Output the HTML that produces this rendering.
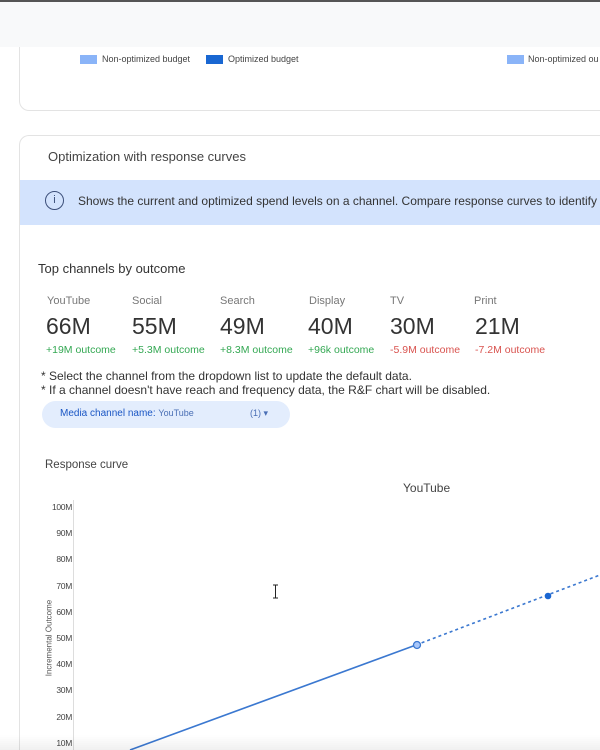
<!DOCTYPE html>
<html><head><meta charset="utf-8"><style>
*{margin:0;padding:0;box-sizing:border-box}
html,body{width:600px;height:750px;overflow:hidden}
body{background:#fff;font-family:"Liberation Sans",Arial,sans-serif;color:#3c4043}
#w{position:relative;width:600px;height:750px;overflow:hidden}
.abs{position:absolute;white-space:nowrap}
</style></head><body><div id="w">
<div class="abs" style="left:0;top:0;width:600px;height:2px;background:#555"></div>
<div class="abs" style="left:0;top:2px;width:600px;height:45px;background:#f8f9fa"></div>
<div class="abs" style="left:19px;top:47px;width:581px;height:64px;border:1px solid #e3e3e3;border-top:none;border-right:none;border-radius:0 0 0 10px"></div>
<div class="abs" style="left:80px;top:55px;width:17px;height:9px;background:#8ab4f8"></div>
<div class="abs" style="left:102px;top:54px;font-size:9px;color:#444">Non-optimized budget</div>
<div class="abs" style="left:206px;top:55px;width:17px;height:9px;background:#1967d2"></div>
<div class="abs" style="left:228px;top:54px;font-size:9px;color:#444">Optimized budget</div>
<div class="abs" style="left:507px;top:55px;width:17px;height:9px;background:#8ab4f8"></div>
<div class="abs" style="left:528px;top:54px;font-size:9px;color:#444">Non-optimized ou</div>

<div class="abs" style="left:19px;top:135px;width:581px;height:615px;border:1px solid #e3e3e3;border-right:none;border-bottom:none;border-radius:10px 0 0 0"></div>
<div class="abs" style="left:48px;top:149px;font-size:13px;color:#444">Optimization with response curves</div>
<div class="abs" style="left:20px;top:180px;width:580px;height:45px;background:#d3e3fd"></div>
<div class="abs" style="left:45px;top:191px;width:19px;height:19px;border:1.3px solid #3c4f7a;border-radius:50%;font-size:11px;text-align:center;line-height:16px;color:#3c4f7a">i</div>
<div class="abs" style="left:78px;top:194px;font-size:12px;color:#333">Shows the current and optimized spend levels on a channel. Compare response curves to identify</div>

<div class="abs" style="left:38px;top:261px;font-size:13px;color:#333">Top channels by outcome</div>
<div class="abs" style="top:295px;left:0;font-size:11px;color:#777">
<span class="abs" style="left:47px">YouTube</span><span class="abs" style="left:132px">Social</span><span class="abs" style="left:220px">Search</span><span class="abs" style="left:309px">Display</span><span class="abs" style="left:390px">TV</span><span class="abs" style="left:474px">Print</span></div>
<div class="abs" style="top:313px;left:0;font-size:23px;color:#333">
<span class="abs" style="left:46px">66M</span><span class="abs" style="left:132px">55M</span><span class="abs" style="left:220px">49M</span><span class="abs" style="left:308px">40M</span><span class="abs" style="left:390px">30M</span><span class="abs" style="left:475px">21M</span></div>
<div class="abs" style="top:344px;left:0;font-size:10.5px">
<span class="abs" style="left:46px;color:#34a853">+19M outcome</span><span class="abs" style="left:132px;color:#34a853">+5.3M outcome</span><span class="abs" style="left:220px;color:#34a853">+8.3M outcome</span><span class="abs" style="left:308px;color:#34a853">+96k outcome</span><span class="abs" style="left:390px;color:#d9534f">-5.9M outcome</span><span class="abs" style="left:475px;color:#d9534f">-7.2M outcome</span></div>
<div class="abs" style="left:41px;top:369px;font-size:12px;color:#333;line-height:14px">* Select the channel from the dropdown list to update the default data.<br>* If a channel doesn't have reach and frequency data, the R&amp;F chart will be disabled.</div>
<div class="abs" style="left:42px;top:401px;width:248px;height:27px;background:#e3edfd;border-radius:14px"></div>
<div class="abs" style="left:60px;top:408px;font-size:10px;color:#1a56c4">Media channel name: <span style="font-size:9px;color:#4a6fb5">YouTube</span></div>
<div class="abs" style="left:250px;top:408px;font-size:9px;color:#4a6fb5">(1) ▾</div>

<div class="abs" style="left:45px;top:459px;font-size:11.5px;color:#444">Response curve</div>
<div class="abs" style="left:403px;top:481px;font-size:12px;color:#444">YouTube</div>
<div class="abs" style="left:73px;top:500px;width:1px;height:250px;background:#ddd"></div>
<div class="abs" style="left:30px;top:494px;width:42px;height:256px;overflow:hidden;font-size:8.5px;letter-spacing:-0.3px;color:#444;text-align:right;line-height:26.2px;white-space:normal">100M<br>90M<br>80M<br>70M<br>60M<br>50M<br>40M<br>30M<br>20M<br>10M</div>
<div class="abs" style="left:49px;top:638px;font-size:8px;color:#555;transform:translate(-50%,-50%) rotate(-90deg)">Incremental Outcome</div>
<svg class="abs" style="left:0;top:0" width="600" height="750">
<line x1="130" y1="750" x2="416" y2="645" stroke="#3b78d0" stroke-width="1.6"/>
<line x1="416" y1="645" x2="600" y2="575" stroke="#3b78d0" stroke-width="1.6" stroke-dasharray="3,3"/>
<circle cx="417" cy="645" r="3.5" fill="#a8c7fa" stroke="#3b78d0" stroke-width="1.3"/>
<circle cx="548" cy="596" r="3.3" fill="#1a66d2"/>
<path d="M273 585h5M275.5 585v13M273 598h5" stroke="#222" stroke-width="1" fill="none"/>
</svg>
<div class="abs" style="left:0;top:735px;width:600px;height:15px;background:linear-gradient(rgba(0,0,0,0),rgba(0,0,0,0.06))"></div>
</div></body></html>
